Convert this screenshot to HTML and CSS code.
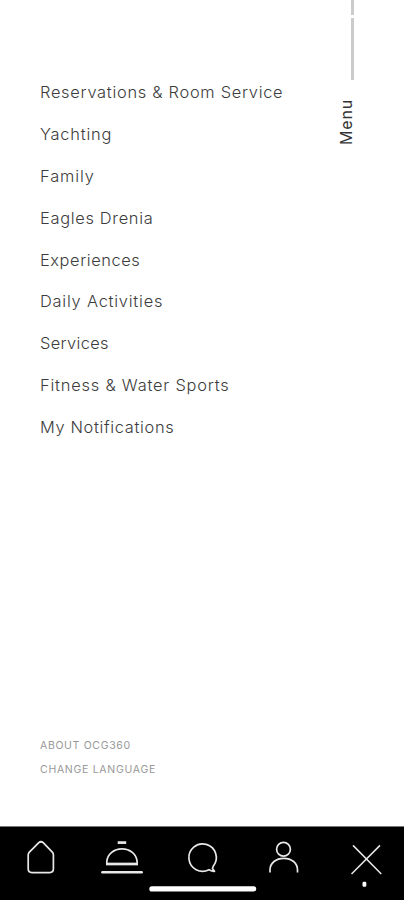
FILE: index.html
```html
<!DOCTYPE html>
<html lang="en">
<head>
<meta charset="utf-8">
<meta name="viewport" content="width=device-width, initial-scale=1">
<title>Menu</title>
<link rel="stylesheet" href="styles.css">
</head>
<body>
<div class="screen">
  <main class="content">
    <nav class="menu">
      <a class="reservations">Reservations &amp; Room Service</a>
      <a class="yachting">Yachting</a>
      <a class="family">Family</a>
      <a class="eagles">Eagles Drenia</a>
      <a class="experiences">Experiences</a>
      <a class="daily">Daily Activities</a>
      <a class="services">Services</a>
      <a class="fitness">Fitness &amp; Water Sports</a>
      <a class="notifications">My Notifications</a>
    </nav>
    <aside class="rail">
      <span class="rule short"></span>
      <span class="rule long"></span>
      <span class="title">Menu</span>
    </aside>
  </main>
  <div class="secondary">
    <a class="about">ABOUT OCG360</a>
    <a class="language">CHANGE LANGUAGE</a>
  </div>
  <footer class="tabs">
    <svg class="icons" viewBox="0 0 404 73" width="404" height="73" fill="none" stroke="#e8e8e8" stroke-width="1.7" stroke-linejoin="round">
      <path d="M38.8 15.7Q41 13.8 43.2 15.7L52.3 25.1Q53.4 26.3 53.4 27.9V41.8Q53.4 45.6 49.6 45.6H32Q28.2 45.6 28.2 41.8V27.9Q28.2 26.3 29.4 25.1Z"/>
      <path d="M117.7 15.6H126.2" stroke-width="2.7"/>
      <path d="M106.8 37V34.5C107.5 27 114 21.8 122 21.8S136.4 27 137.1 34.5V37"/>
      <path d="M106 37H138" stroke-width="2.7"/>
      <path d="M102.4 45.3H141.7" stroke-width="2.4" stroke-linecap="round"/>
      <path d="M209 42.7A13.7 13.7 0 1 1 213.400 39L212.400 41.500L214.500 44.300Q211.100 44.500 209 42.700Z"/>
      <circle cx="283.5" cy="22.3" r="6.9"/>
      <path d="M270 45.5V43C270 36 276 31.3 283.800 31.300S297.500 36 297.500 43V45.500"/>
      <path d="M353 18.4L381.3 47M380 18.4L351.5 47" stroke-width="1.5"/>
      <rect x="362.5" y="54.8" width="3.8" height="5" rx="1.3" fill="#fff" stroke="none"/>
      <rect x="149.3" y="59.300" width="107" height="5.200" rx="2.600" fill="#fff" stroke="none"/>
    </svg>
  </footer>
</div>
</body>
</html>
```
FILE: styles.css
```css
* { box-sizing: border-box; }
body { margin: 0; background: #fff; font-family: Inter, "Liberation Sans", sans-serif; }
.screen { height: 900px; display: flex; flex-direction: column; overflow: hidden; }
.content { flex: 1; display: flex; justify-content: space-between; }
.menu { padding: 72.4px 0 0 40px; display: flex; flex-direction: column; }
.menu a { height: 41.8px; line-height: 41.8px; font-size: 16.4px; font-weight: 300; color: #3c3c3c; white-space: nowrap; }
.menu .reservations { letter-spacing: 0.72px; }
.menu .yachting { letter-spacing: 0.79px; }
.menu .family { letter-spacing: 0.88px; }
.menu .eagles { letter-spacing: 0.69px; }
.menu .experiences { letter-spacing: 0.58px; }
.menu .daily { letter-spacing: 0.78px; }
.menu .services { letter-spacing: 0.34px; }
.menu .fitness { letter-spacing: 0.8px; }
.menu .notifications { letter-spacing: 0.66px; }
.rail { width: 32px; margin-right: 36px; display: flex; flex-direction: column; align-items: center; }
.rule { width: 3px; background: #ccc; }
.short { height: 15px; }
.long { height: 62px; margin-top: 3px; }
.title { margin-top: 19px; margin-right: 12px; writing-mode: vertical-rl; transform: rotate(180deg); font-size: 16px; line-height: 20px; letter-spacing: 0.8px; color: #333; }
.secondary { height: 92px; display: flex; flex-direction: column; padding-left: 40px; }
.secondary a { height: 24.4px; line-height: 24.4px; font-size: 10.5px; color: #999; white-space: nowrap; }
.secondary .about { letter-spacing: 0.66px; }
.secondary .language { letter-spacing: 0.71px; }
.tabs { height: 74px; background: #000; border-top: 1px solid #777; }
.icons { display: block; }
```
